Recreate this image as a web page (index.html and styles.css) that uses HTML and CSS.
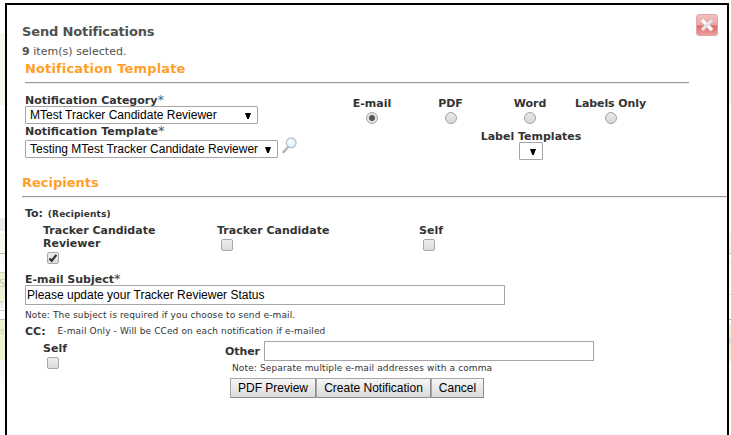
FILE: index.html
```
<!DOCTYPE html>
<html lang="en">
<head>
<meta charset="utf-8">
<title>Send Notifications</title>
<link rel="stylesheet" href="styles.css">
</head>
<body>
<div class="edge edge-left"><span class="edge-s">S</span><span class="edge-t">t</span><span class="edge-rs">s</span></div>
<main class="dialog">
  <button class="close" aria-label="Close">
    <svg width="22" height="22" viewBox="0 0 22 22">
      <defs><linearGradient id="red" x1="0" y1="0" x2="0" y2="1"><stop offset="0" stop-color="#f3c1c1"/><stop offset=".5" stop-color="#eda5a6"/><stop offset=".54" stop-color="#dc696c"/><stop offset="1" stop-color="#efa0a0"/></linearGradient></defs>
      <rect x=".5" y=".5" width="21" height="21" rx="2.5" fill="url(#red)" stroke="#e3a6a6"/>
      <path d="M6.5 6.5l9 9M15.5 6.5l-9 9" stroke="#c88" stroke-width="4.6" opacity=".5"/>
      <path d="M6 6l10 10" stroke="#fff" stroke-width="3.6"/>
      <path d="M16 6L6 16" stroke="#e6e2e2" stroke-width="3.6"/>
    </svg>
  </button>
  <h1>Send Notifications</h1>
  <p class="count"><b>9</b> item(s) selected.</p>
  <h2 class="template-title">Notification Template</h2>
  <hr class="rule rule-template">
  <section class="template">
    <div class="choices">
      <label class="name">Notification Category<span class="req">*</span></label>
      <div class="select category">MTest Tracker Candidate Reviewer<i class="arrow"></i></div>
      <label class="name second">Notification Template<span class="star">*</span></label>
      <div class="with-icon">
        <div class="select">Testing MTest Tracker Candidate Reviewer<i class="arrow"></i></div>
        <svg class="lens" width="16" height="17" viewBox="0 0 16 17">
          <path d="M5.8 10.2L1.6 15" stroke="#aaa5a0" stroke-width="2.4" stroke-linecap="round"/>
          <path d="M5.8 10L2 14.3" stroke="#ddd" stroke-width=".8"/>
          <circle cx="9.2" cy="5.8" r="4.9" fill="#e3f5fd" stroke="#b2bec8" stroke-width="1.2"/>
          <circle cx="8.4" cy="4.8" r="2.2" fill="#f6fdff"/>
        </svg>
      </div>
    </div>
    <div class="formats">
      <div class="format">E-mail<i class="radio on"></i></div>
      <div class="format">PDF<i class="radio"></i></div>
      <div class="format">Word<i class="radio"></i></div>
      <div class="format">Labels Only<i class="radio"></i></div>
      <div class="label-templates">Label Templates<div class="select empty"><i class="arrow"></i></div></div>
    </div>
  </section>
  <h2 class="recipients-title">Recipients</h2>
  <hr class="rule rule-recipients">
  <section class="fields">
    <p class="to">To: <small>(Recipients)</small></p>
    <div class="people">
      <div>Tracker Candidate<br>Reviewer<i class="check"><svg width="12" height="12" viewBox="0 0 12 12"><path d="M2.4 6.5l2.3 2.3L9.4 2.9" fill="none" stroke="#333" stroke-width="2.2"/></svg></i></div>
      <div>Tracker Candidate<i class="check"></i></div>
      <div>Self<i class="check"></i></div>
    </div>
    <p class="name">E-mail Subject<span class="subject-star">*</span></p>
    <div class="input subject">Please update your Tracker Reviewer Status</div>
    <p class="note">Note: The subject is required if you choose to send e-mail.</p>
    <p class="cc">CC:<span class="note">E-mail Only - Will be CCed on each notification if e-mailed</span></p>
    <div class="copy">
      <div class="self">Self<i class="check"></i></div>
      <div class="other-group">
        <div class="other"><span>Other</span><div class="input"></div></div>
        <p class="note">Note: Separate multiple e-mail addresses with a comma</p>
        <div class="buttons"><button class="b-pdf">PDF Preview</button><button class="b-create">Create Notification</button><button class="b-cancel">Cancel</button></div>
      </div>
    </div>
  </section>
</main>
<div class="edge edge-right"></div>
</body>
</html>
```
FILE: styles.css
```
* { box-sizing: border-box; margin: 0; padding: 0; }
body { display: flex; height: 435px; overflow: hidden; background: #fff; color: #333; font: bold 11px/13px "DejaVu Sans", sans-serif; }
.edge { position: relative; flex: none; height: 435px; overflow: hidden; font: 10px/12px "DejaVu Sans", sans-serif; color: #c5ccb8; }
.edge-left { width: 5px; background: linear-gradient(#fff 33px, #f5f7e8 33px 105px, #fff 105px 218px, #ececec 218px 231px, #fff 231px 233px, #f5f7e8 233px 253px, #bbb 253px 254px, #fafafa 254px 265px, #fff 265px 272px, #cbd9ad 272px 273px, #eef3d8 273px 302px, #fff 302px 310px, #ccd 310px 311px, #fff 311px 319px, #bbb 319px 320px, #edf4cf 320px 360px, #f8f8f8 360px 383px, #fdfdfd 383px); }
.edge-s, .edge-t, .edge-rs { position: absolute; left: -1px; top: 278px; }
.edge-t { left: 0; top: 299px; color: #cdd0dc; }
.edge-rs { top: 326px; left: 0; font-size: 8px; }
.edge-right { width: 2px; background: linear-gradient(#fff 33px, #f5f7e4 33px 105px, #fff 105px 233px, #f7f7df 233px 253px, #c5c5b5 253px 254px, #fff 254px 261px, #f4f4f4 261px 265px, #fff 265px 294px, #ddddc8 294px 295px, #fff 295px 319px, #aaa 319px 320px, #fff 320px 325px, #f0f2cb 325px 338px, #ddd 338px 344px, #f0f2cb 344px 361px, #fff 361px 383px, #eee 383px 384px, #fff 384px); }
.dialog { position: relative; flex: none; width: 724px; height: 440px; margin-top: 3px; padding: 19px 0 0 15px; border: 2px solid #000; background: #fff; }
.close { position: absolute; top: 9px; left: 689px; width: 22px; height: 22px; border: 0; background: none; }
.close svg { display: block; }
h1 { font-size: 13px; line-height: 16px; letter-spacing: -.14px; color: #505050; }
.count { margin-top: 5px; font-weight: normal; line-height: 14px; color: #505050; letter-spacing: .04px; }
h2 { font-size: 13px; line-height: 16px; color: #ff9f29; }
.template-title { margin: 2px 0 0 3px; letter-spacing: .14px; }
.rule { height: 2px; margin-top: 5px; border: 0; border-top: 1px solid #999; border-bottom: 1px solid #eee; }
.rule-template { width: 664px; margin-left: 3px; }
.template { display: flex; height: 80px; margin-left: 3px; padding-top: 10px; }
.choices { width: 307px; }
.name { display: block; height: 12px; }
.name span { font-size: 13px; font-weight: normal; line-height: 12px; }
.name .req { color: #06799f; }
.name .star { color: #357; }
.subject-star { color: #336; }
.second { height: 15px; margin-top: 1px; }
.with-icon { display: flex; width: max-content; }
.lens { margin: -3px 0 0 4px; }
.select { position: relative; width: 253px; height: 18px; padding-left: 4px; border: 1px solid #a5a5a5; border-radius: 1px; background: #fff; color: #000; font: 12px/16px "Liberation Sans", Arial, sans-serif; white-space: nowrap; }
.category { width: 233px; }
.arrow { position: absolute; top: 6px; right: 6px; width: 6px; height: 6px; background: #000; clip-path: polygon(0 0, 100% 0, 62% 100%, 38% 100%); }
.formats { display: grid; grid-template-columns: 80px 77px 82px 79px; grid-template-rows: 36px 40px; text-align: center; }
.format { white-space: nowrap; margin-top: 3px; }
.format:nth-child(4) { letter-spacing: -.09px; }
.radio { display: block; width: 12px; height: 12px; margin: 2px auto 0; border: 1px solid #a2a2a2; border-radius: 50%; background: linear-gradient(#e8e8e8, #d8d8d8); }
.radio.on { background: radial-gradient(circle, #555 2.5px, #e4e4e4 3.5px); }
.label-templates { grid-column: 2 / 5; width: 238px; }
.empty { width: 24px; margin: -1px auto 0; }
.recipients-title { margin-top: 11px; }
.fields { margin-left: 3px; padding-top: 9px; }
.to small { margin-left: 1px; font-size: 9px; letter-spacing: .13px; }
.people { display: grid; grid-template-columns: 174px 202px 80px; height: 49px; padding: 3px 0 0 18px; }
.check { display: block; width: 12px; height: 12px; margin: 2px 0 0 4px; border: 1px solid #a8a8a8; border-radius: 2px; background: linear-gradient(#eee, #dcdcdc); }
.check svg { display: block; margin: -1px; }
.people + .name { margin-top: 3px; }
.input { width: 330px; height: 20px; border: 1px solid #a5a5a5; background: #fff; color: #000; font: 12px/18px "Liberation Sans", Arial, sans-serif; padding-left: 1px; }
.subject { width: 480px; }
.note { font-size: 9px; line-height: 11px; font-weight: normal; letter-spacing: .125px; }
.subject + .note { margin-top: 5px; }
.cc { display: flex; margin-top: 4px; gap: 12px; }
.cc .note { padding-top: 1px; }
.copy { display: flex; margin-top: 3px; }
.self { width: 182px; padding: 1px 0 0 18px; }
.self .check { margin-left: 4px; }
.other-group { margin-left: 18px; }
.other { display: flex; align-items: center; gap: 4px; }
.other span { width: 35px; letter-spacing: -.1px; }
.other-group .note { margin: 2px 0 4px 7px; }
.buttons { display: flex; margin-left: 5px; }
.buttons button { height: 20px; border: 1px solid #a6a6a6; border-right-color: #8c8c8c; border-bottom-color: #8c8c8c; background: linear-gradient(#f5f5f5, #dcdcdc); color: #000; font: 12px/18px "Liberation Sans", Arial, sans-serif; white-space: nowrap; }
.b-pdf { width: 86px; }
.b-create { width: 115px; }
.b-cancel { width: 53px; }
```
